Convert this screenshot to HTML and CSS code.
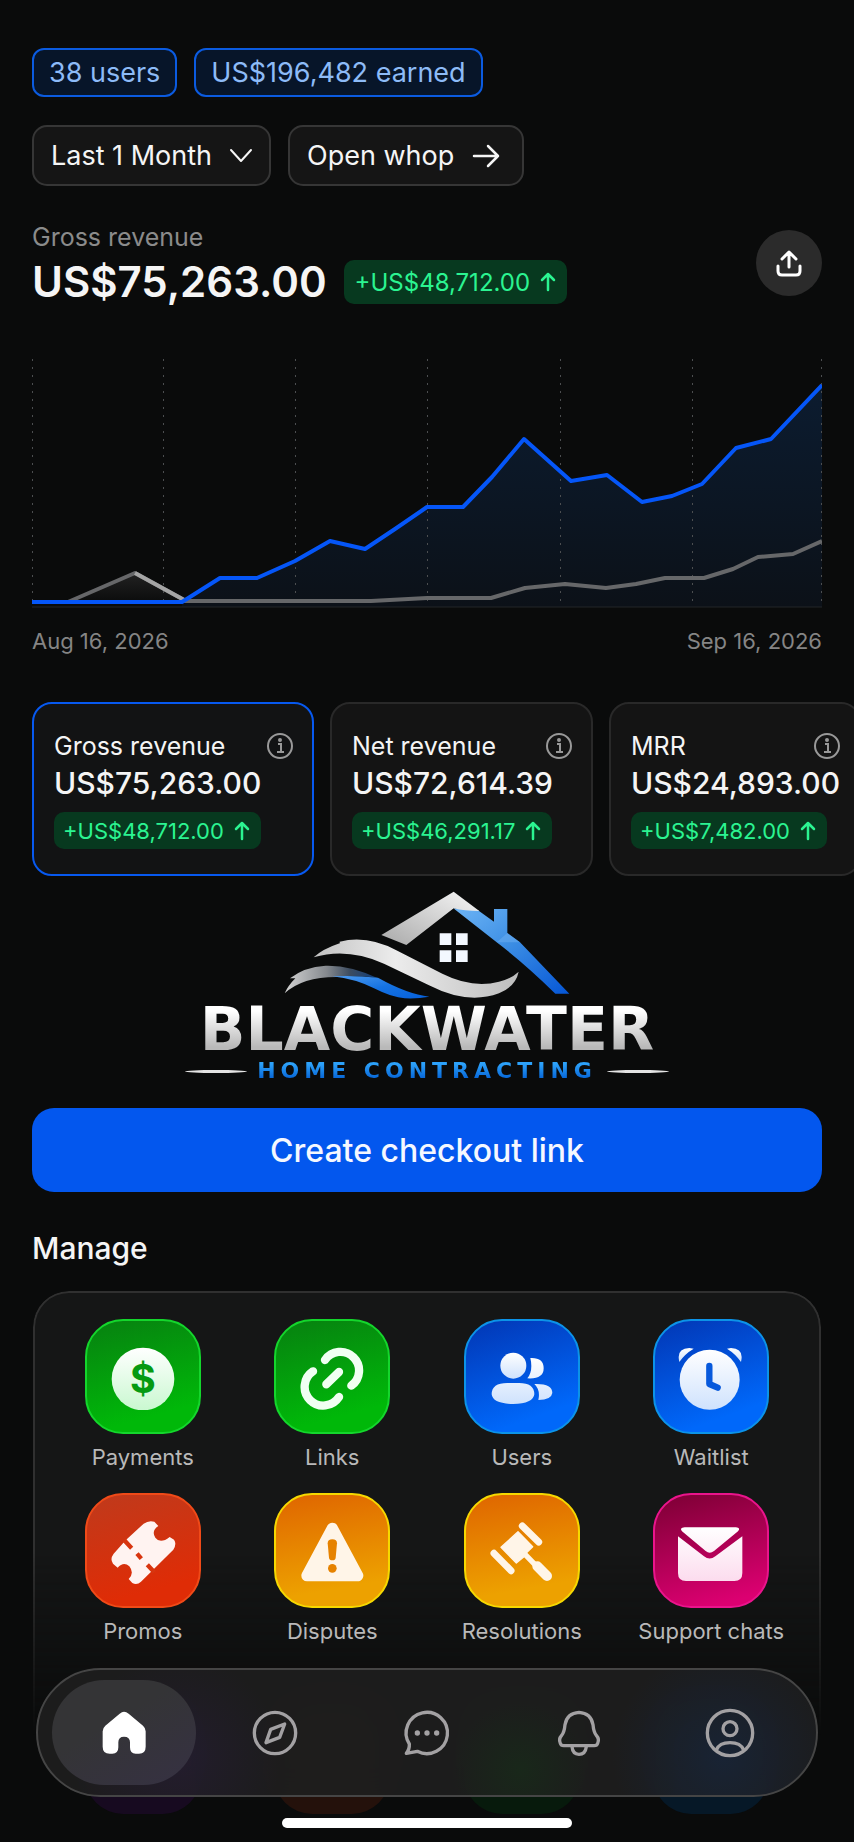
FILE: index.html
```html
<!DOCTYPE html>
<html lang="en">
<head>
    <meta charset="utf-8">
    <meta name="viewport" content="width=device-width, initial-scale=1">
    <title>Dashboard</title>
    <link rel="stylesheet" href="styles.css">
</head>
<body>
    <main class="screen">
        <div class="chips">
            <span class="chip">38 users</span>
            <span class="chip">US$196,482 earned</span>
        </div>

        <div class="filters">
            <div class="select-wrap">
                <select class="control" aria-label="Period">
                    <option>Last 1 Month</option>
                </select>
                <svg class="chevron" width="24" height="16" viewBox="0 0 24 16" fill="none" stroke="currentColor" stroke-width="2" stroke-linecap="round" stroke-linejoin="round">
                    <path d="M2 2l10 11L22 2"></path>
                </svg>
            </div>
            <a class="control open-link" href="#">
                Open whop
                <svg width="28" height="24" viewBox="0 0 28 24" fill="none" stroke="currentColor" stroke-width="2.5" stroke-linecap="round" stroke-linejoin="round">
                    <path d="M2 12h24M16 2l10 10-10 10"></path>
                </svg>
            </a>
        </div>

        <div class="summary">
            <div>
                <div class="summary-label">Gross revenue</div>
                <div class="summary-row">
                    <h1>US$75,263.00</h1>
                    <span class="badge badge-lg">+US$48,712.00
                        <svg width="16" height="20" viewBox="0 0 16 20" fill="none" stroke="currentColor" stroke-width="2.5" stroke-linecap="round" stroke-linejoin="round"><path d="M8 18V2M2 8l6-6 6 6"></path></svg>
                    </span>
                </div>
            </div>
            <button class="share" aria-label="Share">
                <svg width="26" height="28" viewBox="0 0 26 28" fill="none" stroke="currentColor" stroke-width="3" stroke-linecap="round" stroke-linejoin="round">
                    <path d="M13 18V3M6 10l7-7 7 7M2 17v5q0 4 4 4h14q4 0 4-4v-5"></path>
                </svg>
            </button>
        </div>

        <svg class="chart" viewBox="0 0 790 249" fill="none">
            <defs>
                <linearGradient id="areaFill" x1="0" y1="0" x2="0" y2="1">
                    <stop offset="0" stop-color="#0c1c30"></stop>
                    <stop offset="1" stop-color="#0c1118"></stop>
                </linearGradient>
                <linearGradient id="prevFill" x1="0" y1="0" x2="0" y2="1">
                    <stop offset="0" stop-color="#222"></stop>
                    <stop offset="1" stop-color="#0b0c0c"></stop>
                </linearGradient>
            </defs>
            <path fill="url(#prevFill)" d="M36 243L103 214L154 242Z"></path>
            <path fill="url(#areaFill)" d="M150 244L188 219L225 219L263 202L298 182L333 190L363 170L395 148L431 148L460 118L492 80L539 122L575 116L610 143L640 137L670 125L704 89L739 80L790 26V248H150Z"></path>
            <path stroke="#222629" d="M0 248H790"></path>
            <path stroke="#4c4e50" stroke-dasharray="2 6" d="M.5 0V248M131.5 0V248M263.5 0V248M395.5 0V248M528.5 0V248M660.5 0V248M789.5 0V248"></path>
            <path stroke="#666769" stroke-width="4" stroke-linejoin="round" d="M36 243L103 214L154 242H339L395 239H459L493 229L533 225L574 229L604 225L633 219H672L701 210L726 198L761 195L790 182"></path>
            <path stroke="#a5a5a5" stroke-width="4" d="M103 214L154 242"></path>
            <path stroke="#0556f8" stroke-width="4" stroke-linejoin="round" d="M0 243H150L188 219H225L263 202L298 182L333 190L363 170L395 148H431L460 118L492 80L539 122L575 116L610 143L640 137L670 125L704 89L739 80L790 26"></path>
        </svg>
        <div class="chart-dates">
            <span>Aug 16, 2026</span>
            <span>Sep 16, 2026</span>
        </div>

        <div class="cards">
            <div class="card active">
                <div class="card-head">
                    <span>Gross revenue</span>
                    <svg class="info" viewBox="0 0 28 28" fill="none" stroke="currentColor" stroke-width="2"><circle cx="14" cy="14" r="12"></circle><path d="M12 12h3v8M11 20h7"></path><circle cx="14" cy="8" r="1"></circle></svg>
                </div>
                <div class="card-value">US$75,263.00</div>
                <span class="badge">+US$48,712.00
                    <svg width="16" height="20" viewBox="0 0 16 20" fill="none" stroke="currentColor" stroke-width="2.5" stroke-linecap="round" stroke-linejoin="round"><path d="M8 18V2M2 8l6-6 6 6"></path></svg>
                </span>
            </div>
            <div class="card">
                <div class="card-head">
                    <span>Net revenue</span>
                    <svg class="info" viewBox="0 0 28 28" fill="none" stroke="currentColor" stroke-width="2"><circle cx="14" cy="14" r="12"></circle><path d="M12 12h3v8M11 20h7"></path><circle cx="14" cy="8" r="1"></circle></svg>
                </div>
                <div class="card-value">US$72,614.39</div>
                <span class="badge">+US$46,291.17
                    <svg width="16" height="20" viewBox="0 0 16 20" fill="none" stroke="currentColor" stroke-width="2.5" stroke-linecap="round" stroke-linejoin="round"><path d="M8 18V2M2 8l6-6 6 6"></path></svg>
                </span>
            </div>
            <div class="card narrow">
                <div class="card-head">
                    <span>MRR</span>
                    <svg class="info" viewBox="0 0 28 28" fill="none" stroke="currentColor" stroke-width="2"><circle cx="14" cy="14" r="12"></circle><path d="M12 12h3v8M11 20h7"></path><circle cx="14" cy="8" r="1"></circle></svg>
                </div>
                <div class="card-value">US$24,893.00</div>
                <span class="badge">+US$7,482.00
                    <svg width="16" height="20" viewBox="0 0 16 20" fill="none" stroke="currentColor" stroke-width="2.5" stroke-linecap="round" stroke-linejoin="round"><path d="M8 18V2M2 8l6-6 6 6"></path></svg>
                </span>
            </div>
        </div>

        <div class="brand">
            <svg class="brand-mark" viewBox="340 34 858 324">
                <defs>
                    <linearGradient id="silver" x1="0" y1="0" x2="1" y2="0">
                        <stop offset="0" stop-color="#c2c2c2"></stop>
                        <stop offset=".4" stop-color="#ececec"></stop>
                        <stop offset="1" stop-color="#bdbdbd"></stop>
                    </linearGradient>
                    <linearGradient id="roofLeft" x1="0" y1="1" x2="1" y2="0">
                        <stop offset="0" stop-color="#a9a9a9"></stop>
                        <stop offset="1" stop-color="#f7f7f7"></stop>
                    </linearGradient>
                    <linearGradient id="roofRight" x1="0" y1="0" x2="1" y2="1">
                        <stop offset="0" stop-color="#6db4f5"></stop>
                        <stop offset=".45" stop-color="#3c8ee4"></stop>
                        <stop offset="1" stop-color="#0556d6"></stop>
                    </linearGradient>
                    <linearGradient id="lowWave" x1="0" y1="0" x2="1" y2="0">
                        <stop offset="0" stop-color="#d4d4d4"></stop>
                        <stop offset=".45" stop-color="#85898e"></stop>
                        <stop offset=".7" stop-color="#3c4c60"></stop>
                        <stop offset="1" stop-color="#0d3c7c"></stop>
                    </linearGradient>
                    <linearGradient id="blueWave" x1="0" y1="0" x2="1" y2="1">
                        <stop offset="0" stop-color="#4f9cf0"></stop>
                        <stop offset=".5" stop-color="#1673e2"></stop>
                        <stop offset="1" stop-color="#0560dc"></stop>
                    </linearGradient>
                </defs>
                <path fill="url(#roofRight)" d="M848 86L922 92L970 126V88H1010V160L1048 188L1196 342H1154Q1060 250 978 188Z"></path>
                <path fill="#6db0f2" opacity=".5" d="M978 188L1010 160L1048 188Z"></path>
                <path fill="url(#roofLeft)" d="M632 166L849 36L926 94Q880 94 849 86L707 196Z"></path>
                <path fill="#f3f8ff" d="M807 161h35v35h-35zM856 161h35v35h-35zM807 212h35v35h-35zM856 212h35v35h-35z"></path>
                <path fill="url(#silver)" d="M429 233Q455 208 509 190Q505 187 507 186Q590 165 680 213L815 282Q905 327 985 306Q1022 297 1044 276Q1035 320 985 341Q890 376 775 317L640 252Q530 203 429 233Z"></path>
                <path fill="url(#lowWave)" d="M342 341Q352 318 374 296Q366 296 358 296Q400 262 465 258Q540 256 622 296Q560 284 497 292Q395 292 342 341Z"></path>
                <path fill="url(#blueWave)" d="M485 290Q550 286 622 294Q710 343 776 351Q740 358 702 356Q665 354 610 326Q555 298 485 290Z"></path>
            </svg>
            <div class="brand-name">BLACKWATER</div>
            <div class="brand-tag"><span>HOME CONTRACTING</span></div>
        </div>

        <button class="cta">Create checkout link</button>

        <h2>Manage</h2>
        <div class="panel">
            <a class="tile" href="#">
                <span class="icon green">
                    <svg viewBox="269 190 198 198"><circle cx="368" cy="295" r="94" fill="url(#iconGreen)"></circle><text class="dollar" x="368" y="338" text-anchor="middle">$</text></svg>
                </span>
                Payments
            </a>
            <a class="tile" href="#">
                <span class="icon green">
                    <svg viewBox="836 190 198 198" fill="none" stroke="#f0fff2" stroke-width="25" stroke-linecap="round"><path d="M914 238A56 56 0 1 1 993 315M878 272A56 56 0 1 0 956 349M918 311L956 274"></path></svg>
                </span>
                Links
            </a>
            <a class="tile" href="#">
                <span class="icon blue">
                    <svg viewBox="175 190 198 198" fill="url(#iconBlue)"><circle cx="248" cy="255" r="39"></circle><path d="M299 232Q339 230 339 263Q339 296 290 293Q308 270 299 232ZM183 341Q183 307 230 307H265Q311 307 311 341Q308 369 247 370Q186 369 183 341ZM311 310Q365 308 365 337Q362 358 323 358Q330 328 311 310Z"></path></svg>
                </span>
                Users
            </a>
            <a class="tile" href="#">
                <span class="icon blue">
                    <svg viewBox="748 190 198 198" fill="url(#iconBlue)"><circle cx="843" cy="297" r="90"></circle><path d="M752 244Q742 203 782 202L795 204Q768 220 752 244ZM937 244Q947 203 907 202L895 204Q921 220 937 244Z"></path><path d="M842 256V310L867 321" fill="none" stroke="#0759dc" stroke-width="19" stroke-linecap="round" stroke-linejoin="round"></path></svg>
                </span>
                Waitlist
            </a>
            <a class="tile" href="#">
                <span class="icon red">
                    <svg viewBox="269 713 198 198"><path fill="#fff3f1" d="M316 780L370 730Q385 719 402 724L414 737Q392 752 405 772Q420 792 448 770L461 778Q470 790 459 808L362 904Q350 915 336 908L325 896Q343 878 327 858Q310 842 292 862L278 850Q268 836 280 820Z"></path><path d="M312 780L334 804M350 820L363 835M381 853L402 876" fill="none" stroke="#d8350f" stroke-width="13"></path></svg>
                </span>
                Promos
            </a>
            <a class="tile" href="#">
                <span class="icon amber">
                    <svg viewBox="836 713 198 198"><path d="M936 744L1012 886H860Z" fill="#fff5e8" stroke="#fff5e8" stroke-width="34" stroke-linejoin="round"></path><path fill="#e68200" d="M922 789Q922 777 936 777Q950 777 950 789L946 832Q945 840 936 840Q927 840 926 832Z"></path><circle cx="936" cy="864" r="13" fill="#e68200"></circle></svg>
                </span>
                Disputes
            </a>
            <a class="tile" href="#">
                <span class="icon amber">
                    <svg viewBox="174 713 198 198" fill="none" stroke="#fff5e8" stroke-linecap="round" stroke-linejoin="round"><path stroke-width="21" d="M274 737L323 785M189 819L240 871"></path><path fill="#fff5e8" stroke-width="4" d="M261 754L305 799L288 816L277 831L256 848L210 801Z"></path><path stroke-width="16" d="M280 820L312 853"></path><path stroke-width="30" d="M319 858L348 887"></path></svg>
                </span>
                Resolutions
            </a>
            <a class="tile" href="#">
                <span class="icon pink">
                    <svg viewBox="748 713 198 198" fill="url(#iconPink)"><path d="M768 741H922Q937 743 928 753L856 812Q843 822 831 812L760 753Q751 743 768 741ZM748 768L826 828Q843 841 860 828L941 768V878Q941 902 917 902H772Q748 902 748 878Z"></path></svg>
                </span>
                Support chats
            </a>
            <span class="tile faded"><span class="icon violet"></span></span>
            <span class="tile faded"><span class="icon rust"></span></span>
            <span class="tile faded"><span class="icon forest"></span></span>
            <span class="tile faded"><span class="icon navy"></span></span>
        </div>
    </main>

    <!-- shared gradients for the tile icons -->
    <svg class="defs" width="0" height="0">
        <defs>
            <linearGradient id="iconGreen" x1="0" y1="0" x2="0" y2="1"><stop offset="0" stop-color="#fff"></stop><stop offset="1" stop-color="#c9f8d0"></stop></linearGradient>
            <linearGradient id="iconBlue" x1="0" y1="0" x2="0" y2="1"><stop offset="0" stop-color="#fff"></stop><stop offset="1" stop-color="#cfe2fd"></stop></linearGradient>
            <linearGradient id="iconPink" x1="0" y1="0" x2="0" y2="1"><stop offset="0" stop-color="#fff"></stop><stop offset="1" stop-color="#fcdcee"></stop></linearGradient>
        </defs>
    </svg>

    <nav class="tabbar">
        <a class="tab active" href="#" aria-label="Home">
            <svg viewBox="301 205 144 144" fill="currentColor"><path d="M373 213Q380 213 387 219L430 255Q438 262 438 272V318Q438 339 418 339H408Q391 339 391 320V305Q391 288 373 288Q356 288 356 305V320Q356 339 338 339H330Q309 339 309 318V272Q309 262 317 255L360 219Q367 213 373 213Z"></path></svg>
        </a>
        <a class="tab" href="#" aria-label="Discover">
            <svg viewBox="755 205 144 144" fill="none" stroke="currentColor" stroke-width="10" stroke-linejoin="round"><circle cx="827" cy="277" r="62"></circle><path d="M856 250L841 290L800 306L814 266Z"></path></svg>
        </a>
        <a class="tab" href="#" aria-label="Chats">
            <svg viewBox="1210 205 144 144" fill="none" stroke="currentColor" stroke-width="10" stroke-linejoin="round"><path d="M1229 310A62 62 0 1 1 1253 332L1220 338Q1230 326 1229 310Z"></path><g fill="currentColor" stroke="none"><circle cx="1253" cy="277" r="8"></circle><circle cx="1282" cy="277" r="8"></circle><circle cx="1311" cy="277" r="8"></circle></g></svg>
        </a>
        <a class="tab" href="#" aria-label="Notifications">
            <svg viewBox="390 205 144 144" fill="none" stroke="currentColor" stroke-width="10" stroke-linejoin="round"><path d="M462 215Q498 217 504 252Q506 275 514 284Q524 295 518 308Q516 315 508 315H416Q408 315 406 308Q400 295 410 284Q418 275 420 252Q426 217 462 215ZM441 318Q443 341 462 341Q481 341 484 318"></path></svg>
        </a>
        <a class="tab" href="#" aria-label="Profile">
            <svg viewBox="848 206 144 144" fill="none" stroke="currentColor" stroke-width="10"><circle cx="920" cy="278" r="68"></circle><circle cx="920" cy="265" r="21"></circle><path d="M879 329Q888 307 920 307Q952 307 961 329"></path></svg>
        </a>
    </nav>
    <div class="home-indicator"></div>
</body>
</html>
```

FILE: styles.css
```css
* {
    box-sizing: border-box;
}
body {
    margin: 0;
    background-color: #0a0b0b;
    color: #f5f5f5;
    font-family: Inter, "Liberation Sans", sans-serif;
    font-size: 25px;
    overflow-x: hidden;
}
a {
    color: inherit;
    text-decoration: none;
}
button, select {
    font-family: inherit;
    cursor: pointer;
}
.screen {
    padding: 48px 32px 0;
}
.chips, .filters {
    display: flex;
    gap: 17px;
}
.chip {
    height: 49px;
    padding: 0 15px;
    border: 2px solid #0b5be0;
    border-radius: 12px;
    background-color: #071529;
    color: #8dbbf7;
    font-size: 27px;
    line-height: 45px;
}
.filters {
    margin-top: 28px;
}
.select-wrap {
    position: relative;
}
.control {
    height: 61px;
    border: 2px solid #363636;
    border-radius: 15px;
    background-color: #151515;
    color: #f5f5f5;
    font-size: 27px;
}
select.control {
    appearance: none;
    padding: 0 56px 0 17px;
}
.chevron {
    position: absolute;
    right: 18px;
    top: 23px;
    pointer-events: none;
}
.open-link {
    display: flex;
    align-items: center;
    gap: 18px;
    padding: 0 22px 0 17px;
}
.summary {
    display: flex;
    justify-content: space-between;
    align-items: flex-start;
    margin-top: 36px;
}
.summary-label {
    color: #8b8b8b;
    line-height: 30px;
}
.summary-row {
    display: flex;
    align-items: center;
    gap: 17px;
}
h1 {
    margin: 0;
    font-size: 42px;
    font-weight: 600;
    line-height: 60px;
}
.badge {
    display: inline-flex;
    align-items: center;
    gap: 10px;
    height: 37px;
    padding: 0 11px 0 9px;
    border-radius: 10px;
    background-color: #07391f;
    color: #2bf491;
    font-size: 22px;
}
.badge-lg {
    height: 44px;
    padding: 0 11px;
    font-size: 24px;
}
.share {
    display: flex;
    align-items: center;
    justify-content: center;
    width: 66px;
    height: 66px;
    margin-top: 8px;
    border: none;
    border-radius: 50%;
    background-color: #2b2b2b;
    color: #fff;
}
.chart {
    display: block;
    width: 100%;
    margin-top: 47px;
}
.chart-dates {
    display: flex;
    justify-content: space-between;
    margin-top: 18px;
    color: #858585;
    font-size: 22px;
    line-height: 30px;
}
.cards {
    display: flex;
    gap: 16px;
    margin: 46px -32px 0 0;
    overflow: hidden;
}
.card {
    flex: 0 0 32%;
    height: 174px;
    padding: 28px 18px 0 20px;
    border: 2px solid #292929;
    border-radius: 20px;
    background-color: #141414;
}
.card.active {
    flex-basis: 282px;
    border-color: #0759f0;
    background-color: #121314;
}
.card.narrow {
    flex-basis: 252px;
}
.card-head {
    display: flex;
    justify-content: space-between;
    align-items: center;
    line-height: 28px;
}
.info {
    width: 28px;
    height: 28px;
    color: #999;
}
.card-value {
    margin-bottom: 6px;
    font-size: 30px;
    font-weight: 500;
    line-height: 46px;
}
.brand {
    display: flex;
    flex-direction: column;
    align-items: center;
    margin-top: 15px;
}
.brand-mark {
    width: 286px;
    height: 108px;
}
.brand-name {
    background: linear-gradient(#fff 20%, #b9b9b9 80%);
    background-clip: text;
    -webkit-background-clip: text;
    color: transparent;
    font-family: "DejaVu Sans", sans-serif;
    font-size: 60px;
    font-weight: 700;
    line-height: 60px;
}
.brand-tag {
    display: flex;
    align-items: center;
    gap: 10px;
    font-family: "DejaVu Sans", sans-serif;
    font-size: 22px;
    font-weight: 700;
    letter-spacing: 5px;
    line-height: 24px;
}
.brand-tag span {
    background: linear-gradient(#2da2fa 20%, #0767d8 80%);
    background-clip: text;
    -webkit-background-clip: text;
    color: transparent;
}
.brand-tag::before, .brand-tag::after {
    content: "";
    width: 62px;
    height: 3px;
    border-radius: 50%;
    background-color: #e4e4e4;
}
.cta {
    display: block;
    width: 100%;
    height: 84px;
    margin-top: 25px;
    border: none;
    border-radius: 22px;
    background-color: #0357ee;
    color: #f5f8ff;
    font-size: 32px;
    font-weight: 500;
}
h2 {
    margin: 36px 0 23px;
    font-size: 30px;
    font-weight: 500;
    line-height: 40px;
}
.panel {
    position: relative;
    display: grid;
    grid-template-columns: repeat(4, 1fr);
    gap: 21px 0;
    margin: 0 1px;
    padding: 28px 15px 0;
}
/* card surface fades out towards the tab bar */
.panel::before {
    content: "";
    position: absolute;
    inset: 0;
    z-index: -1;
    border: 2px solid #303030;
    border-bottom: none;
    border-radius: 36px 36px 0 0;
    background-color: #151616;
    mask-image: linear-gradient(#000 50%, transparent 85%);
    -webkit-mask-image: linear-gradient(#000 50%, transparent 85%);
}
.tile {
    display: flex;
    flex-direction: column;
    align-items: center;
    gap: 8px;
    color: #b9b9b9;
    font-size: 22px;
    line-height: 30px;
    white-space: nowrap;
}
.icon {
    display: flex;
    align-items: center;
    justify-content: center;
    width: 116px;
    height: 115px;
    border: 2px solid;
    border-radius: 38px;
}
.icon svg {
    width: 66px;
    height: 66px;
}
.green {
    border-color: #14d62c;
    background: linear-gradient(165deg, #078010, #00b809 80%);
}
.blue {
    border-color: #0c93e8;
    background: linear-gradient(160deg, #0236b4, #0068fa 80%);
}
.red {
    border-color: #f04a18;
    background: linear-gradient(165deg, #bf3a1c, #df2c06 80%);
}
.amber {
    border-color: #f6d800;
    background: linear-gradient(170deg, #df6500, #eda100 80%);
}
.pink {
    border-color: #ea148c;
    background: linear-gradient(165deg, #7c0034, #dc0071 90%);
}
.dollar {
    fill: #069a12;
    font-size: 118px;
    font-weight: 700;
}
.faded {
    padding-top: 32px;
}
.faded .icon {
    border: none;
}
.violet {
    background-color: #170a20;
}
.rust {
    background-color: #24110b;
}
.forest {
    background-color: #071a0c;
}
.navy {
    background-color: #061827;
}
.defs {
    position: absolute;
}
.tabbar {
    position: fixed;
    left: 36px;
    right: 36px;
    bottom: 45px;
    display: grid;
    grid-template-columns: repeat(5, 1fr);
    height: 129px;
    padding: 10px;
    border: 2px solid #454545;
    border-radius: 65px;
    background:
        radial-gradient(circle at 18% 70%, rgba(60, 30, 110, 0.2), transparent 16%),
        radial-gradient(circle at 62% 80%, rgba(15, 70, 20, 0.25), transparent 14%),
        radial-gradient(circle at 88% 70%, rgba(15, 50, 110, 0.28), transparent 16%),
        rgba(30, 30, 30, 0.94);
    backdrop-filter: blur(16px);
}
.tab {
    display: flex;
    align-items: center;
    justify-content: center;
    margin: 0 4px;
    border-radius: 53px;
    color: #a3a1a3;
}
.tab.active {
    background: linear-gradient(150deg, #343436 40%, #363143);
    color: #fff;
}
.tab svg {
    width: 48px;
    height: 48px;
    overflow: visible;
}
.home-indicator {
    position: fixed;
    left: 33%;
    right: 33%;
    bottom: 14px;
    height: 10px;
    border-radius: 5px;
    background-color: #fff;
}
```
